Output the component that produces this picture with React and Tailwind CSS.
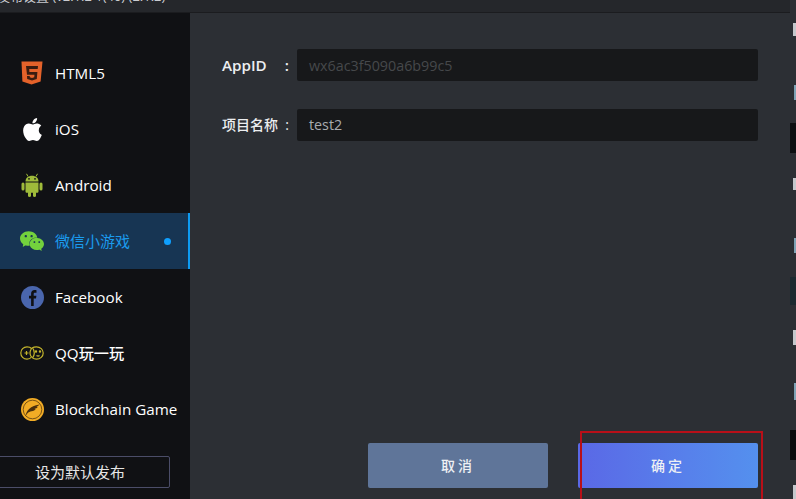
import { SiApple, SiWechat } from 'react-icons/si'

const FONT = "font-['Open_Sans','Noto_Sans_CJK_SC',sans-serif]"

function Html5Icon() {
  return (
    <svg width="22" height="24" viewBox="0 0 22 24">
      <path d="M0.5 0.5h21l-1.9 20-9.1 3-9.1-3z" fill="#e4622a" />
      <path d="M5 5h12l-.3 3H8.200l.2 3h8l-.6 7-4.800 1.500L6.200 18 6 15h2.700l.1 1.300 2.200.7 2.200-.7.3-2.600H6z" fill="#3a1c10" />
    </svg>
  )
}

function AndroidIcon() {
  return (
    <svg width="22" height="24" viewBox="0 0 22 24" fill="#9fbb3a">
      <path d="M4.500 8.500C4.500 5 7.300 2.800 11 2.800s6.500 2.200 6.500 5.700z" />
      <path d="M7 3.500 5.500.8M15 3.500 16.500.8" stroke="#9fbb3a" strokeWidth="1" />
      <circle cx="8" cy="5.800" r=".9" fill="#101114" />
      <circle cx="14" cy="5.800" r=".9" fill="#101114" />
      <path d="M4.500 9.500h13v9c0 .8-.6 1.300-1.300 1.300H5.800c-.7 0-1.300-.5-1.300-1.300z" />
      <rect x="0.500" y="9.500" width="3" height="8" rx="1.500" />
      <rect x="18.500" y="9.500" width="3" height="8" rx="1.500" />
      <rect x="7" y="18" width="3" height="6" rx="1.500" />
      <rect x="12" y="18" width="3" height="6" rx="1.500" />
    </svg>
  )
}

function FacebookIcon() {
  return (
    <svg width="23" height="23" viewBox="0 0 23 23">
      <circle cx="11.500" cy="11.500" r="11.500" fill="#4a66ad" />
      <path d="M12.700 20v-7.500h2.300l.4-2.800h-2.700V8c0-.8.3-1.300 1.400-1.300h1.400V4.200c-.3 0-1.100-.1-2-.1-2 0-3.400 1.200-3.400 3.500v2.100H8v2.800h2.100V20z" fill="#101114" />
    </svg>
  )
}

function QQGameIcon() {
  return (
    <svg width="24" height="14" viewBox="0 0 24 14" fill="none" stroke="#c4b52c" strokeWidth="1.200">
      <path d="M11.500 2.500C10.500 1.300 9 .8 7 .8 3.500.8.800 3.500.800 7s2.700 6.200 6.200 6.200c2 0 3.500-.8 4.500-2.200 -1-1.200-1.500-2.500-1.500-4s.5-2.900 1.500-4.500z" />
      <path d="M12.500 1.800c1-.8 2.500-1 4-1 3.800 0 6.700 2.800 6.700 6.200s-2.900 6.200-6.700 6.200c-1.500 0-3-.4-4-1.300 1.200-1.300 1.800-3 1.800-4.900s-.6-3.800-1.800-5.200z" />
      <path d="M4.500 7h4M6.500 5v4" />
      <circle cx="16" cy="5.500" r=".6" fill="#c4b52c" />
      <circle cx="20" cy="5.500" r=".6" fill="#c4b52c" />
      <path d="M16.500 9.500c1 .7 2.200.7 3 0" />
    </svg>
  )
}

function BlockchainIcon() {
  return (
    <svg width="23" height="23" viewBox="0 0 23 23">
      <circle cx="11.500" cy="11.500" r="11.500" fill="#f2ac25" />
      <circle cx="11.500" cy="11.500" r="9.300" fill="none" stroke="#5a3c10" strokeWidth=".8" />
      <path d="M4.500 18c1-5 4-10 14-11.500-1 1-1.500 1.500-3 2 .5.300 1 .3 1.500.2-1 1.200-2 1.800-3.500 2.200.5.200 1 .3 1.500.2-1 1.200-2.500 2-4.500 2.200-1.500.2-3 .8-4.200 2.200z" fill="#4a2f0c" />
    </svg>
  )
}

const items = [
  { name: 'HTML5', icon: <Html5Icon /> },
  { name: 'iOS', icon: <SiApple size={23} color="#ffffff" /> },
  { name: 'Android', icon: <AndroidIcon /> },
  { name: '微信小游戏', icon: <SiWechat size={24} color="#73d13d" />, active: true },
  { name: 'Facebook', icon: <FacebookIcon /> },
  { name: 'QQ玩一玩', icon: <QQGameIcon /> },
  { name: 'Blockchain Game', icon: <BlockchainIcon /> },
]

export default function App() {
  return (
    <div className={`${FONT} flex h-[499px] w-[796px] overflow-hidden bg-[#2c2f34]`}>
      <div className="flex w-[790px] flex-col">
        {/* title bar, cut off by the screenshot */}
        <div className="flex h-[13px] shrink-0 items-start justify-between overflow-hidden border-b border-[#1b1c1f] bg-[#25272b] pr-[22px]">
          <span className="-mt-[10px] -ml-[3px] text-[13px] leading-[13px] whitespace-nowrap text-[#c9cbcf]">发布设置 (v2.1.2 1(40) (2.1.2)</span>
          <span className="-mt-[8px] text-[10px] leading-[10px] text-[#d0d0d0]">× ×</span>
        </div>

        <div className="flex min-h-0 flex-1">
          {/* sidebar */}
          <div className="flex w-[190px] shrink-0 flex-col bg-[#101114] pt-[32px]">
            {items.map((item) => (
              <div
                key={item.name}
                className={`flex h-14 items-center border-r-2 pl-5 ${item.active ? 'border-[#0d9bf2] bg-[#173553]' : 'border-transparent'}`}
              >
                <div className="flex w-[24px] justify-center">{item.icon}</div>
                <span className={`ml-[11px] whitespace-nowrap ${item.active ? 'text-[15px] text-[#1b9bee]' : 'pt-px text-[15.2px] font-medium text-white'}`}>
                  {item.name}
                </span>
                {item.active && <span className="mr-[17px] ml-auto h-[7px] w-[7px] rounded-full bg-[#0fa0ff]" />}
              </div>
            ))}
            <button className="mt-[19px] -ml-[10px] h-8 w-[180px] shrink-0 rounded-[2px] border border-[#4b4d68] text-[15px] text-[#e6e6e6]">
              设为默认发布
            </button>
          </div>

          {/* form */}
          <div className="flex flex-1 flex-col px-8 pt-9 pb-[11px]">
            <div className="flex items-center">
              <span className="flex w-[75px] justify-between pt-px pr-[8px] text-[15.2px] font-semibold text-[#eceef0]">
                <span>AppID</span>
                <span>:</span>
              </span>
              <div className="flex h-8 flex-1 items-center rounded-[2px] bg-[#17181a] pt-px pl-3 text-[14.300px] text-[#46484b]">wx6ac3f5090a6b99c5</div>
            </div>
            <div className="mt-7 flex items-center">
              <span className="flex w-[75px] justify-between pr-[8px] text-sm font-medium whitespace-nowrap text-[#eceef0]">
                <span>项目名称</span>
                <span>:</span>
              </span>
              <div className="flex h-8 flex-1 items-center rounded-[2px] bg-[#17181a] pl-3 text-[14.300px] text-[#a8abae]">test2</div>
            </div>
            <div className="mt-auto flex justify-end gap-[30px]">
              <button className="h-[45px] w-[180px] rounded-[2px] bg-[#5f7599] text-sm font-medium tracking-[3px] text-[#eef0f4]">取消</button>
              <div className="relative">
                <button className="h-[45px] w-[180px] rounded-[2px] bg-gradient-to-r from-[#5a68e6] to-[#5490ee] text-sm font-medium tracking-[3px] text-[#eef0f4]">确定</button>
                {/* red annotation box from the screenshot */}
                <div className="absolute -top-[12px] -right-[5px] -bottom-[11px] left-[2px] border-2 border-b-0 border-[#b80f18]" />
              </div>
            </div>
          </div>
        </div>
      </div>

      {/* slice of the window behind */}
      <div className="flex w-1.5 flex-col items-end">
        <div className="mt-[23px] h-[13px] w-[3px] bg-[#c5c8cc]" />
        <div className="mt-[49px] h-[15px] w-[2px] bg-[#7fa3b5]" />
        <div className="mt-[23px] h-[30px] w-full bg-[#0d1012]" />
        <div className="mt-[25px] h-[12px] w-[3px] bg-[#c5c8cc]" />
        <div className="mt-[48px] h-[15px] w-[2px] bg-[#7fa3b5]" />
        <div className="mt-[24px] h-[28px] w-full bg-[#1c2a30]" />
        <div className="mt-[25px] h-[15px] w-[3px] bg-[#c5c8cc]" />
        <div className="mt-[38px] h-[17px] w-[2px] bg-[#7fa3b5]" />
        <div className="mt-[30px] h-[30px] w-full bg-[#0b0c0d]" />
        <div className="mt-[25px] h-[14px] w-[3px] bg-[#c5c8cc]" />
      </div>
    </div>
  )
}
